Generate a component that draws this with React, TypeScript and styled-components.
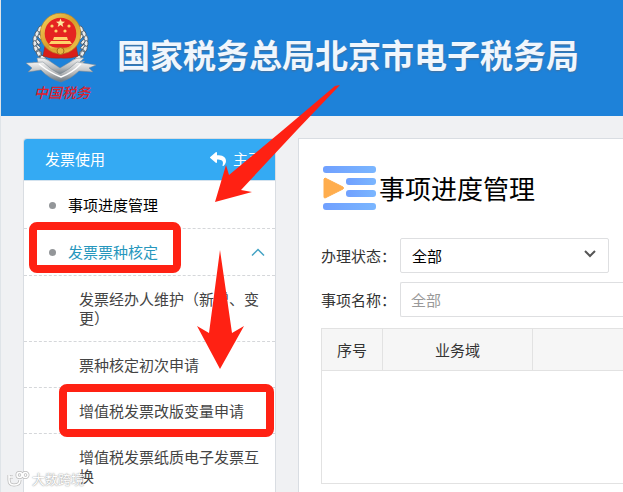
import React from "react";
import styled, { createGlobalStyle } from "styled-components";
import { FaReply } from "react-icons/fa";

const GlobalStyle = createGlobalStyle`
  * { box-sizing: border-box; }
  body {
    margin: 0;
    background: #f0f1f3;
    color: #333;
    font: 15px/20px "Noto Sans CJK SC", sans-serif;
  }
  a { color: inherit; text-decoration: none; }
  button, input, select { font: inherit; }
`;

const Page = styled.div`
  position: relative;
  height: 100vh;
  overflow: hidden;
  display: flex;
  flex-direction: column;
  border-left: 1px solid #dfe4e8;
`;

const Banner = styled.header`
  flex: none;
  display: flex;
  align-items: center;
  gap: 20px;
  height: 116px;
  padding: 0 22px;
  background: #1e82d9;
`;

const BannerTitle = styled.h1`
  margin: 0;
  padding-bottom: 8px;
  color: #f0f6fd;
  font-size: 33px;
  line-height: 44px;
  font-weight: 700;
  white-space: nowrap;
  text-shadow: 0 1px 2px #486f96;
`;

const Columns = styled.div`
  flex: 1;
  display: flex;
  gap: 22px;
  padding: 22px 0 0 22px;
`;

const Sidebar = styled.nav`
  flex: none;
  width: 253px;
  background: #fff;
  border: 1px solid #d9dde2;
  border-bottom: 0;
  border-radius: 4px 4px 0 0;
`;

const SidebarHead = styled.div`
  display: flex;
  align-items: center;
  justify-content: space-between;
  height: 42px;
  padding: 0 12px 1px 21px;
  color: #fff;
  background: #34aaf3;
  border-bottom: 1px solid #d3e2ee;
  border-radius: 3px 3px 0 0;
`;

const HomeLink = styled.a`
  display: flex;
  align-items: center;
  gap: 7px;
`;

const Menu = styled.ul`
  margin: 0;
  padding: 1px 0 0;
  list-style: none;
`;

const MenuItem = styled.li`
  position: relative;
  border-bottom: 1px dashed #d5d7da;
`;

const topRow = `
  display: flex;
  align-items: center;
  gap: 12px;
  width: 100%;
  height: 46px;
  padding: 0 10px 0 25px;
`;

const TopLink = styled.a`
  ${topRow}
  color: #000;
`;

const TopToggle = styled.button`
  ${topRow}
  border: 0;
  background: none;
  color: #2797bd;
  text-align: left;
  cursor: pointer;
`;

const Bullet = styled.span`
  width: 7px;
  height: 7px;
  border-radius: 50%;
  background: #939699;
`;

const CaretUp = styled.svg`
  margin-left: auto;
`;

const SubLink = styled.a`
  display: block;
  padding: 13px 10px 12px 55px;
  color: #444;
`;

const WrappedSubLink = styled(SubLink)`
  padding-top: 13px;
  padding-bottom: 14px;
  line-height: 19px;
`;

const Highlight = styled.span<{ $inset: string }>`
  position: absolute;
  inset: ${(p) => p.$inset};
  z-index: 1;
  border: 8px solid #ff2113;
  border-radius: 8px;
  pointer-events: none;
`;

const Panel = styled.main`
  flex: 1;
  min-width: 0;
  padding: 22px 0 0 22px;
  background: #fff;
  border: 1px solid #d9dde2;
  border-width: 1px 0 0 1px;
`;

const PanelHead = styled.div`
  display: flex;
  align-items: center;
  gap: 2px;
  height: 54px;
  margin-bottom: 23px;
`;

const PanelTitle = styled.h2`
  margin: 0;
  color: #000;
  font-size: 26px;
  line-height: 36px;
  font-weight: 400;
`;

const Field = styled.div`
  display: flex;
  align-items: center;
  margin-bottom: 9px;
`;

const FieldLabel = styled.label`
  flex: none;
  width: 79px;
`;

const SelectWrap = styled.div`
  position: relative;
  width: 209px;
`;

const Select = styled.select`
  display: block;
  width: 100%;
  height: 35px;
  padding: 0 32px 0 11px;
  appearance: none;
  background: #fff;
  color: #000;
  border: 1px solid #dedfe1;
  border-radius: 2px;
`;

const SelectCaret = styled.svg`
  position: absolute;
  right: 13px;
  top: 11px;
  pointer-events: none;
`;

const Input = styled.input`
  flex: 1;
  min-width: 0;
  height: 35px;
  padding: 0 10px;
  background: #fff;
  border: 1px solid #dedfe1;
  border-right: 0;
  border-radius: 2px 0 0 2px;
  &::placeholder { color: #999; opacity: 1; }
`;

const Table = styled.table`
  width: 100%;
  margin-top: 11px;
  border-collapse: collapse;
  table-layout: fixed;
  border: 1px solid #e2e2e2;
  border-right: 0;
`;

const HeadCell = styled.th<{ $width?: number }>`
  width: ${(p) => (p.$width ? `${p.$width}px` : "auto")};
  height: 42px;
  padding: 0;
  font-weight: 400;
  background: #f6f6f6;
  border: 1px solid #e2e2e2;
  border-right: 0;
`;

const EmptyCell = styled.td`
  height: 113px;
  padding: 0;
`;

const Arrows = styled.svg`
  position: absolute;
  left: -1px;
  top: 0;
  z-index: 2;
  pointer-events: none;
`;

const Watermark = styled.div`
  position: absolute;
  left: 6px;
  bottom: 3px;
  display: flex;
  align-items: center;
  gap: 2px;
  color: #fff;
  font-size: 13px;
  text-shadow: 0 0 1px #999, 0 0 2px #aaa;
`;

function Emblem() {
  const leaves = [
    [39, 29], [36, 34], [34, 39], [34, 44], [35, 49], [38, 54], [42, 58],
  ];
  return (
    <svg width="74" height="96" viewBox="22 10 74 96" role="img" aria-label="中国税务">
      <defs>
        <linearGradient id="silver" x1="0" y1="0" x2="0" y2="1">
          <stop offset="0" stopColor="#f4f4f4" />
          <stop offset="0.55" stopColor="#b7b9bb" />
          <stop offset="1" stopColor="#66737d" />
        </linearGradient>
        <linearGradient id="gold" x1="0" y1="0" x2="1" y2="1">
          <stop offset="0" stopColor="#f5cf58" />
          <stop offset="0.5" stopColor="#d69d2b" />
          <stop offset="1" stopColor="#f0c34b" />
        </linearGradient>
      </defs>
      {leaves.map(([x, y], i) => (
        <g key={y} fill="#e8eaeb" stroke="#465564" strokeWidth="0.8">
          <ellipse cx={x} cy={y} rx="2" ry="3.4" transform={`rotate(${28 - i * 13} ${x} ${y})`} />
          <ellipse cx={x + 3} cy={y + 3} rx="1.6" ry="2.8" transform={`rotate(${-30 - i * 6} ${x + 3} ${y + 3})`} />
          <ellipse cx={119 - x} cy={y} rx="2" ry="3.4" transform={`rotate(${i * 13 - 28} ${119 - x} ${y})`} />
          <ellipse cx={116 - x} cy={y + 3} rx="1.6" ry="2.8" transform={`rotate(${30 + i * 6} ${116 - x} ${y + 3})`} />
        </g>
      ))}
      <path d="M44 46h31l2 10q-8 3-17 2-10 1-18-2z" fill="#d81e19" stroke="#a9261a" strokeWidth="0.6" />
      <circle cx="59.5" cy="33.500" r="18" fill="#e52421" stroke="url(#gold)" strokeWidth="4.400" />
      <circle cx="59.5" cy="33.500" r="20.300" fill="none" stroke="#b98528" strokeWidth="0.7" />
      <path d="M59.500 18.500l1.200 3.100 3.300.1-2.600 2 .9 3.200-2.800-1.900-2.800 1.900.9-3.200-2.600-2 3.300-.1z" fill="#ffe9a0" />
      <g fill="#ffd36b">
        <circle cx="51" cy="26" r="1.600" /><circle cx="68" cy="26" r="1.600" />
        <circle cx="55" cy="31" r="1.600" /><circle cx="64" cy="31" r="1.600" />
        <path d="M53 37h13l1 3h-15zM50 41h19l2 3h-23z" />
      </g>
      <path d="M48 46q12 4 23 0l-2 3q-10 4-19 0z" fill="url(#gold)" />
      <circle cx="59.500" cy="51" r="3.500" fill="#e6b843" stroke="#a66d1c" />
      <g fill="url(#silver)" stroke="#798791" strokeWidth="0.5">
        <path d="M36 58q8-1 14 4l9 6 10-6q6-5 14-4l-4 4 5-1-7 6q-10 3-17 9-11-6-20-8l-8-6 5 1z" />
        <path d="M25 63l17-1q8 8 17 12 9-4 17-12l19 3-7 3 4 4-14-1q-8 8-18 11-12-3-20-12l-13 2 4-4z" />
      </g>
      <path d="M38 64q11 9 22 13 11-4 20-13" fill="none" stroke="#fff" strokeWidth="1.500" />
      <text x="33" y="98" fill="#dc202c" fontFamily="'Noto Sans CJK SC', sans-serif" fontSize="14" fontStyle="italic" fontWeight="500">中国税务</text>
    </svg>
  );
}

function ProgressIcon() {
  return (
    <svg width="56" height="46" viewBox="0 0 56 46" aria-hidden="true">
      <defs>
        <linearGradient id="bar">
          <stop offset="0" stopColor="#70a0ff" />
          <stop offset="1" stopColor="#7ab6ff" />
        </linearGradient>
      </defs>
      <g fill="url(#bar)">
        <rect x="2" y="1" width="53" height="7" rx="3" />
        <rect x="25" y="13" width="30" height="7" rx="3" />
        <rect x="25" y="25" width="30" height="7" rx="3" />
        <rect x="2" y="38" width="53" height="7" rx="3" />
      </g>
      <path d="M4 13l18 9q1 1 0 2L4 33q-1 0-1-1V14z" fill="#ffad4d" stroke="#ffad4d" strokeLinejoin="round" />
    </svg>
  );
}

export default function App() {
  return (
    <>
      <GlobalStyle />
      <Page>
        <Banner>
          <Emblem />
          <BannerTitle>国家税务总局北京市电子税务局</BannerTitle>
        </Banner>
        <Columns>
          <Sidebar aria-label="发票使用">
            <SidebarHead>
              <span>发票使用</span>
              <HomeLink href="#home"><FaReply size={16} />主页</HomeLink>
            </SidebarHead>
            <Menu>
              <MenuItem>
                <TopLink href="#progress"><Bullet />事项进度管理</TopLink>
              </MenuItem>
              <MenuItem>
                <TopToggle type="button" aria-expanded="true">
                  <Bullet />发票票种核定
                  <CaretUp width="14" height="10" viewBox="0 0 14 10" aria-hidden="true">
                    <path d="M1 8.500l6-6 6 6" fill="none" stroke="#45a3c4" strokeWidth="1.500" />
                  </CaretUp>
                </TopToggle>
                <Highlight $inset="-7px 94px 2px 5px" />
              </MenuItem>
              <MenuItem>
                <WrappedSubLink href="#agent">发票经办人维护（新增、变更）</WrappedSubLink>
              </MenuItem>
              <MenuItem>
                <SubLink href="#first">票种核定初次申请</SubLink>
              </MenuItem>
              <MenuItem>
                <SubLink href="#change">增值税发票改版变量申请</SubLink>
                <Highlight $inset="-4px 1px -4px 35px" />
              </MenuItem>
              <MenuItem>
                <WrappedSubLink href="#swap">增值税发票纸质电子发票互换</WrappedSubLink>
              </MenuItem>
            </Menu>
          </Sidebar>
          <Panel>
            <PanelHead>
              <ProgressIcon />
              <PanelTitle>事项进度管理</PanelTitle>
            </PanelHead>
            <Field>
              <FieldLabel htmlFor="status">办理状态：</FieldLabel>
              <SelectWrap>
                <Select id="status" defaultValue="all"><option value="all">全部</option></Select>
                <SelectCaret width="12" height="10" viewBox="0 0 12 10" aria-hidden="true">
                  <path d="M1 2l5 5 5-5" fill="none" stroke="#555" strokeWidth="2" />
                </SelectCaret>
              </SelectWrap>
            </Field>
            <Field>
              <FieldLabel htmlFor="name">事项名称：</FieldLabel>
              <Input id="name" placeholder="全部" />
            </Field>
            <Table>
              <thead>
                <tr>
                  <HeadCell scope="col" $width={61}>序号</HeadCell>
                  <HeadCell scope="col" $width={150}>业务域</HeadCell>
                  <HeadCell scope="col" />
                </tr>
              </thead>
              <tbody>
                <tr><EmptyCell colSpan={3} /></tr>
              </tbody>
            </Table>
          </Panel>
        </Columns>
        <Arrows width="350" height="380" viewBox="0 0 350 380" aria-hidden="true">
          <g fill="#ff2113">
            <path d="M340 85L297 130 241 190l11 2-37 10 11-37 3 10 54-45 52-44z" />
            <path d="M220 250l12 83 12-7-24 43-23-43 12 7z" />
          </g>
        </Arrows>
        <Watermark>
          <svg width="23" height="16" viewBox="0 0 23 16" fill="none" stroke="#bbb" strokeWidth="3" aria-hidden="true">
            <path id="mark" d="M2 4v5q0 5 5 5 6 0 6-5M2 6h4M10 4a2.500 2.500 0 1 0 5 0 2.500 2.500 0 1 0-5 0M16 4a2.500 2.500 0 1 0 5 0 2.500 2.500 0 1 0-5 0" />
            <path d="M2 4v5q0 5 5 5 6 0 6-5M2 6h4M10 4a2.500 2.500 0 1 0 5 0 2.500 2.500 0 1 0-5 0M16 4a2.500 2.500 0 1 0 5 0 2.500 2.500 0 1 0-5 0" stroke="#fff" strokeWidth="1.500" />
          </svg>
          大数跨境
        </Watermark>
      </Page>
    </>
  );
}
